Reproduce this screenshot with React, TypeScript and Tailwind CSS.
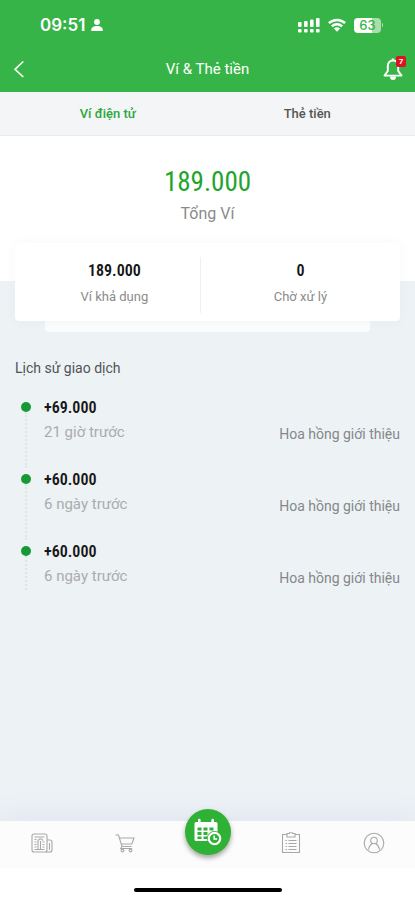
import type { ReactNode } from "react";

const NARROW = "font-['Roboto_Condensed','Liberation_Sans_Narrow',Roboto,sans-serif]";

const transactions = [
  { amount: "+69.000", time: "21 giờ trước", note: "Hoa hồng giới thiệu" },
  { amount: "+60.000", time: "6 ngày trước", note: "Hoa hồng giới thiệu" },
  { amount: "+60.000", time: "6 ngày trước", note: "Hoa hồng giới thiệu" },
];

function StatusBar() {
  return (
    <div className="flex h-[50px] items-center justify-between pr-8 pl-10 text-white">
      <div className="flex items-center gap-1">
        <span className="font-[Inter,sans-serif] text-[17px] leading-5 font-semibold">09:51</span>
        <svg className="h-3 w-[14px]" viewBox="-2 0 14 12" fill="currentColor" aria-hidden="true">
          <circle cx="6" cy="3" r="2.9" />
          <path d="M0.3 12V10.6C0.3 8.2 2.6 7 6 7s5.7 1.2 5.7 3.6V12z" />
        </svg>
      </div>
      <div className="flex items-center gap-2">
        <svg className="h-4 w-[22px]" viewBox="0 0 22 16" fill="currentColor" aria-hidden="true">
          <rect x="0" y="5" width="3.6" height="5" rx="1" />
          <rect x="6" y="4" width="3.6" height="6" rx="1" />
          <rect x="12" y="2.5" width="3.6" height="7.5" rx="1" />
          <rect x="18" y="1" width="3.6" height="9" rx="1" />
          <rect x="0" y="12" width="3.6" height="3.4" rx="1" />
          <rect x="6" y="12" width="3.6" height="3.4" rx="1" />
          <rect x="12" y="12" width="3.6" height="3.4" rx="1" />
          <rect x="18" y="12" width="3.6" height="3.4" rx="1" />
        </svg>
        <svg className="h-[14px] w-[18px]" viewBox="0 0 18 14" fill="none" stroke="currentColor" strokeWidth="2.5" aria-hidden="true">
          <path d="M0.9 5.2a11.6 11.6 0 0 1 16.2 0" />
          <path d="M3.9 8.4a7.3 7.3 0 0 1 10.2 0" />
          <path d="M9 13.8L5.9 10.6a4.4 4.4 0 0 1 6.2 0z" fill="currentColor" stroke="none" />
        </svg>
        <div className="flex items-center gap-px">
          <div className="flex h-[15px] w-[27px] items-center justify-center rounded bg-[linear-gradient(90deg,#fff_65%,#a9deac_65%)] font-[Inter,sans-serif] text-[13px] leading-[15px] font-medium text-[#37b447]">
            63
          </div>
          <div className="h-1 w-px rounded-r bg-[#a9deac]" />
        </div>
      </div>
    </div>
  );
}

function TopBar() {
  return (
    <div className="flex h-[42px] items-center justify-between px-3 pb-1 text-white">
      <button type="button" aria-label="Quay lại" className="flex w-7 items-center">
        <svg className="h-[18px] w-[13px]" viewBox="0 0 13 18" fill="none" stroke="currentColor" strokeWidth="1.6" aria-hidden="true">
          <path d="M11.300 1.500L3 9.300l8.300 7.700" />
        </svg>
      </button>
      <h1 className="text-[15px] leading-5">Ví &amp; Thẻ tiền</h1>
      <button type="button" aria-label="Thông báo" className="relative flex w-7 justify-end">
        <svg className="h-6 w-5" viewBox="0 0 20 24" fill="none" stroke="currentColor" strokeWidth="1.9" strokeLinejoin="round" aria-hidden="true">
          <path d="M10 3.5C6.5 3.5 4.8 6 4.8 9.4V14L1.5 18.6H18.5L15.2 14V9.4C15.2 6 13.5 3.5 10 3.5z" />
          <path d="M10 1.5V3.5" strokeWidth="2.4" />
          <path d="M7 19.5a3 3.6 0 0 0 6 0z" fill="currentColor" stroke="none" />
        </svg>
        <span className="absolute -top-px -right-[3px] h-[11px] w-[10px] rounded-xs bg-[#dc1420] text-center text-[8px] leading-[11px] font-bold">7</span>
      </button>
    </div>
  );
}

function Stat({ value, label }: { value: string; label: string }) {
  return (
    <>
      <span className={`${NARROW} text-base leading-5 font-semibold text-[#151515]`}>{value}</span>
      <span className="text-[13px] leading-4 text-[#8b8b8b]">{label}</span>
    </>
  );
}

function NavItem({ label, children }: { label: string; children: ReactNode }) {
  return (
    <button type="button" aria-label={label} className="flex h-[47px] flex-1 items-center justify-center pb-1 text-[#a8a8a8]">
      <svg className="size-[22px]" viewBox="0 0 22 22" fill="none" stroke="currentColor" strokeWidth="1.1" aria-hidden="true">
        {children}
      </svg>
    </button>
  );
}

function BottomNav() {
  return (
    <footer className="mt-auto bg-white shadow-[0_-4px_30px_rgba(120,110,200,0.1)]">
      <nav className="flex bg-[#fcfcfc]">
        <NavItem label="Tin tức">
          <rect x="1" y="2" width="15" height="18" rx="2" />
          <path d="M16 8h3a2 2 0 0 1 2 2v8a2 2 0 0 1-2 2h-4" />
          <path d="M3.500 5h10M3.500 7.500h2M3.500 10h2M3.500 12.500h2M3.500 15h2M3.500 17.500h10M11.500 10h2M11.500 12.500h2M11.500 15h2M7 17V8.500l1.500-1.500h2L12 8.500M9.500 9v8M18.500 11v7" />
        </NavItem>
        <NavItem label="Giỏ hàng">
          <path d="M1.500 3H4.500L8 14.500H17.500M5.300 6H20L17.800 12H7.300M8 14.500L6.700 16.500H18" />
          <circle cx="8.500" cy="18.500" r="1.400" />
          <circle cx="16.500" cy="18.500" r="1.400" />
        </NavItem>
        <div className="flex flex-1 justify-center">
          <button
            type="button"
            aria-label="Lịch hẹn"
            className="relative -mt-3 flex size-[46px] items-center justify-center rounded-full bg-[#2eb135] text-white shadow-[0_3px_5px_rgba(0,0,0,0.35)]"
          >
            <svg className="size-7" viewBox="0 0 28 28" aria-hidden="true">
              <path d="M2 4h2V2a1.300 1.300 0 0 1 2.600 0v2h10.800V2a1.300 1.300 0 0 1 2.600 0v2h2a1.500 1.500 0 0 1 1.500 1.500V23H2a1.500 1.500 0 0 1-1.500-1.500v-16A1.500 1.500 0 0 1 2 4z" fill="currentColor" />
              <path d="M3.500 9.500h4v3h-4zM9.500 9.500h4v3h-4zM15.500 9.500h4v3h-4zM3.500 14h4v3h-4zM9.500 14h4v3h-4zM3.500 18.500h4v2.500h-4zM9.500 18.500h4v2.500h-4z" fill="#2eb135" />
              <circle cx="20.500" cy="20.500" r="7.500" fill="#2eb135" />
              <circle cx="20.500" cy="20.500" r="5.700" fill="none" stroke="currentColor" strokeWidth="2.200" />
              <path d="M20.200 17.500v3.500h3" fill="none" stroke="currentColor" strokeWidth="1.600" />
            </svg>
          </button>
        </div>
        <NavItem label="Đơn hàng">
          <path d="M7 2.500H2.500V20.500H19.500V2.500H15M7 1.500H9.500a1.500 1.500 0 0 1 3 0H15V5H7z" />
          <path d="M5.500 8.500h1.500M8.500 8.500h8M5.500 11.500h1.500M8.500 11.500h8M5.500 14.500h1.500M8.500 14.500h8M5.500 17.500h1.500M8.500 17.500h8" />
        </NavItem>
        <NavItem label="Tài khoản">
          <circle cx="11" cy="11" r="9.800" />
          <circle cx="11" cy="8.500" r="3.300" />
          <path d="M5.500 17.500C6 14.500 7.500 12.500 9.500 11.500M16.500 17.500C16 14.500 14.500 12.500 12.500 11.500" />
        </NavItem>
      </nav>
      <div className="flex h-8 items-end justify-center pb-2">
        <div className="h-1 w-[148px] rounded-full bg-black" />
      </div>
    </footer>
  );
}

export default function App() {
  return (
    <div className="flex min-h-screen flex-col bg-[#edf2f5] font-[Roboto,sans-serif]">
      <header className="bg-[#37b447]">
        <StatusBar />
        <TopBar />
      </header>

      <div className="flex h-11 border-b border-[#ebebed] bg-[#f4f5f7] text-[13px] font-medium">
        <button type="button" className="flex-1 pl-2 text-[#2ba83a]">Ví điện tử</button>
        <button type="button" className="flex-1 pr-2 text-[#555]">Thẻ tiền</button>
      </div>

      <main>
        <section className="flex h-[145px] flex-col items-center bg-white pt-7">
          <p className={`${NARROW} text-[27px] leading-9 text-[#1fa52c]`}>189.000</p>
          <p className="mt-1 text-base leading-5 text-[#8b8b8b]">Tổng Ví</p>
        </section>

        <section className="relative -mt-[38px] px-[15px]">
          <div className="relative z-10 flex h-[78px] rounded bg-white pt-[18px] shadow-[0_0_12px_rgba(40,80,100,0.04)]">
            <div className="flex w-12/25 flex-col items-center gap-2 pl-[14px]">
              <Stat value="189.000" label="Ví khả dụng" />
            </div>
            <div className="-mt-1 h-14 w-px bg-[#f0f0f0]" />
            <div className="flex flex-1 flex-col items-center gap-2">
              <Stat value="0" label="Chờ xử lý" />
            </div>
          </div>
          <div className="mx-[30px] h-[11px] rounded-b bg-[#fbfcfc]" />
        </section>

        <section className="px-[15px] pt-7">
          <h2 className="text-sm leading-4 text-[#515355]">Lịch sử giao dịch</h2>
          <ul className="mt-5">
            {transactions.map((item, index) => (
              <li key={index} className="group flex h-[72px] pl-[6px]">
                <div className="flex w-[10px] flex-col items-center pt-[6px] group-last:pb-[22px]">
                  <div className="size-[10px] shrink-0 rounded-full bg-[#179a35]" />
                  <div className="flex-1 border-l-2 border-dotted border-[#e0e4e7]" />
                </div>
                <div className="ml-[13px] flex flex-1 flex-col pt-[2px]">
                  <span className={`${NARROW} text-base leading-5 font-semibold text-[#171717]`}>{item.amount}</span>
                  <div className="mt-[2px] flex items-center justify-between">
                    <span className="text-[15px] leading-5 text-[#aaacae]">{item.time}</span>
                    <span className="pt-1 text-sm leading-5 text-[#85888b]">{item.note}</span>
                  </div>
                </div>
              </li>
            ))}
          </ul>
        </section>
      </main>

      <BottomNav />
    </div>
  );
}
